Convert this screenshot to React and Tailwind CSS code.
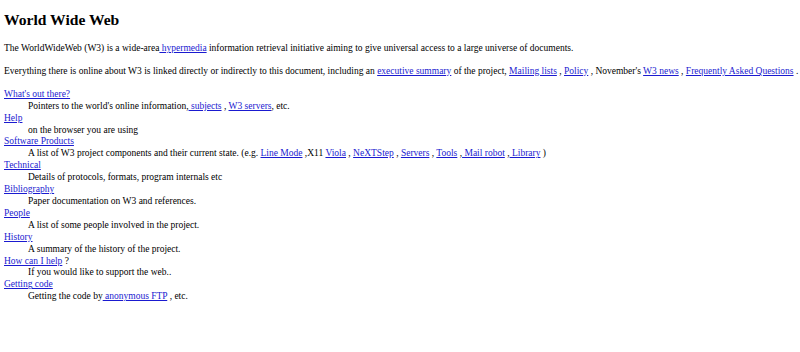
const A = ({ children }) => (
  <a href="#" className="text-[#1a1ad0] underline">
    {children}
  </a>
);

const items = [
  ["What's out there?", <>Pointers to the world's online information,<A> subjects</A> , <A>W3 servers</A>, etc.</>],
  ["Help", <>on the browser you are using</>],
  [
    "Software Products",
    <>
      A list of W3 project components and their current state. (e.g. <A>Line Mode</A> ,X11 <A>Viola</A> , <A>NeXTStep</A> ,{" "}
      <A>Servers</A> , <A>Tools</A> ,<A> Mail robot</A> ,<A> Library</A> )
    </>,
  ],
  ["Technical", <>Details of protocols, formats, program internals etc</>],
  ["Bibliography", <>Paper documentation on W3 and references.</>],
  ["People", <>A list of some people involved in the project.</>],
  ["History", <>A summary of the history of the project.</>],
  ["How can I help", <>If you would like to support the web..</>, true],
  ["Getting code", <>Getting the code by<A> anonymous FTP</A> , etc.</>],
];

export default function App() {
  return (
    <div className="min-h-[352px] bg-white px-1 text-black font-['Liberation_Serif',serif] text-[9.5px] leading-[11.9px]">
      <h1 className="pt-[9px] text-[15.6px] font-bold leading-[22px]">World Wide Web</h1>
      <p className="mt-[12px] whitespace-nowrap">
        The WorldWideWeb (W3) is a wide-area<A> hypermedia</A> information retrieval initiative aiming to give universal
        access to a large universe of documents.
      </p>
      <p className="mt-[11px] whitespace-nowrap">
        Everything there is online about W3 is linked directly or indirectly to this document, including an{" "}
        <A>executive summary</A> of the project, <A>Mailing lists</A> , <A>Policy</A> , November's <A>W3 news</A> ,{" "}
        <A>Frequently Asked Questions</A> .
      </p>
      <dl className="mt-[11px]">
        {items.map(([t, d, q]) => (
          <div key={t}>
            <dt>
              <A>{t}</A>
              {q && " ?"}
            </dt>
            <dd className="pl-[24px] whitespace-nowrap">{d}</dd>
          </div>
        ))}
      </dl>
    </div>
  );
}
